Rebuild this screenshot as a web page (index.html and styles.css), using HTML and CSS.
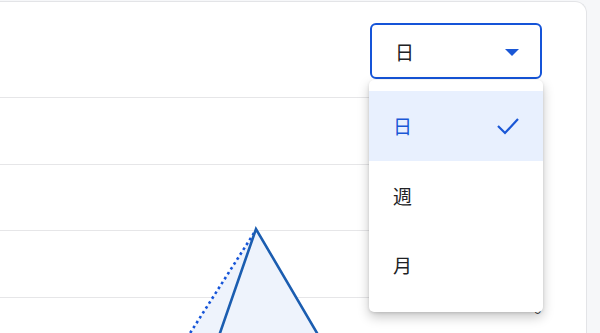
FILE: index.html
```html
<!DOCTYPE html>
<html>
<head>
    <title>Chart</title>
    <link rel="stylesheet" href="styles.css">
</head>
<body>
<div class="card">
    <div class="header">
        <div class="picker">
            <div class="select">
                <span>日</span>
                <span class="arrow"></span>
            </div>
            <div class="menu">
                <div class="item active">
                    <span>日</span>
                    <svg width="22" height="18" viewBox="0 0 22 18"><polyline points="1,9 8,16 21,2" fill="none" stroke="#1a57d6" stroke-width="2.2"/></svg>
                </div>
                <div class="item"><span>週</span></div>
                <div class="item"><span>月</span></div>
            </div>
        </div>
    </div>
    <div class="chart">
        <div class="row"><div class="line"></div><div class="tick"></div></div>
        <div class="row"><div class="line"></div><div class="tick"></div></div>
        <div class="row"><div class="line"></div><div class="tick"></div></div>
        <div class="row last"><div class="line"></div><div class="tick">0</div></div>
        <svg class="plot" width="560" height="236" viewBox="0 0 560 236">
            <polygon points="182,266 267,132 345.6,266" fill="#eef3fc"/>
            <line x1="265" y1="136" x2="182" y2="266" stroke="#1554d8" stroke-width="2.6" stroke-dasharray="2.6 3.2"/>
            <polyline points="220.6,266 267,132 345.6,266" fill="none" stroke="#1b5db0" stroke-width="2.6"/>
        </svg>
    </div>
</div>
</body>
</html>
```

FILE: styles.css
```css
body {
    margin: 0;
    height: 333px;
    overflow: hidden;
    background: #f6f7f9;
    font-family: "Noto Sans CJK JP", "Noto Sans", sans-serif;
    color: #202124;
}
.card {
    margin: 1px 0 0 -12px;
    width: 599px;
    height: 332px;
    overflow: hidden;
    background: white;
    border: 1px solid #e3e4e7;
    border-bottom: none;
    border-radius: 12px 12px 0 0;
    box-sizing: border-box;
}
.header {
    display: flex;
    justify-content: flex-end;
    padding: 21px 44px 0 0;
    height: 95px;
    box-sizing: border-box;
}
.picker {
    position: relative;
    width: 172px;
}
.select {
    height: 56px;
    border: 2px solid #1554d8;
    border-radius: 6px;
    box-sizing: border-box;
    display: flex;
    align-items: center;
    justify-content: space-between;
    padding: 0 21px 0 23px;
    font-size: 19px;
}
.arrow {
    width: 0;
    height: 0;
    border-left: 7px solid transparent;
    border-right: 7px solid transparent;
    border-top: 7px solid #1a57d6;
    margin-top: 3px;
}
.menu {
    position: absolute;
    top: 57px;
    left: -1px;
    right: -1px;
    z-index: 2;
    background: white;
    border-radius: 5px;
    padding: 11px 0 12px;
    box-shadow: 0 5px 12px rgba(0, 0, 0, 0.22), 0 1px 3px rgba(0, 0, 0, 0.12);
}
.item {
    height: 69.5px;
    display: flex;
    align-items: center;
    justify-content: space-between;
    padding: 0 24px 0 24px;
    font-size: 19px;
}
.item.active {
    background: #e8f0fe;
    color: #1a57d6;
}
.chart {
    position: relative;
    height: 236px;
}
.row {
    display: flex;
    height: 66.5px;
}
.row.last {
    height: 36px;
}
.line {
    flex: 1;
    border-top: 1px solid #e6e6e8;
}
.tick {
    width: 52px;
    padding: 5px 0 0 3px;
    font-family: "Liberation Sans", sans-serif;
    font-size: 13px;
    color: #3c4043;
}
.plot {
    position: absolute;
    left: 0;
    top: 0;
}
```
